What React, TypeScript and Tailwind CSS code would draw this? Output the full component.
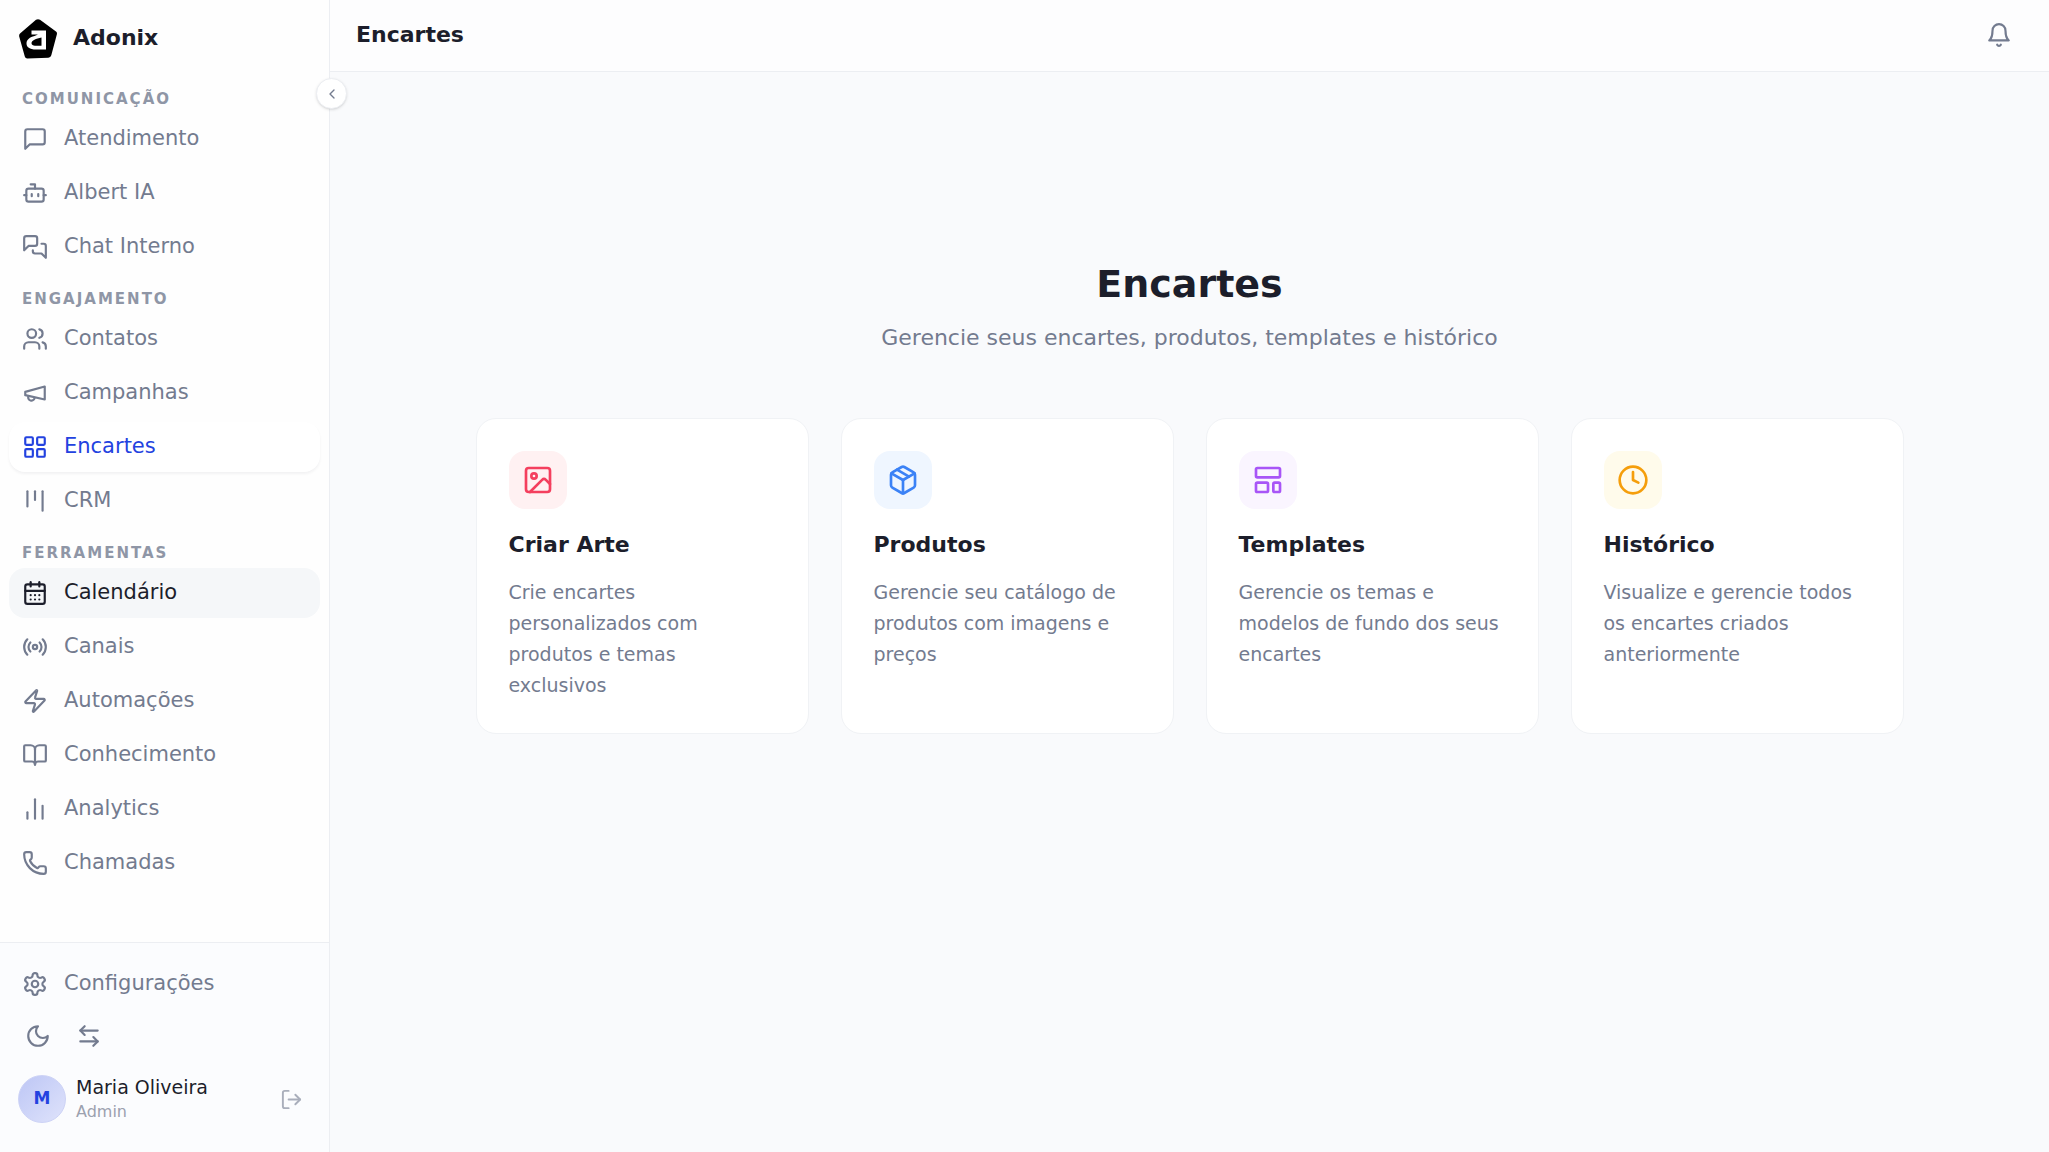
import {
    ArrowLeftRight,
    Bot,
    BookOpen,
    CalendarDays,
    ChartNoAxesColumn,
    ChevronLeft,
    Clock,
    Image,
    Kanban,
    LayoutGrid,
    LayoutTemplate,
    LogOut,
    Package,
    Phone,
    Radio,
    Zap,
    createLucideIcon,
} from "lucide-react";

const MessageSquare = createLucideIcon("message-square", [
    ["path", { d: "M21 15a2 2 0 0 1-2 2H7l-4 4V5a2 2 0 0 1 2-2h14a2 2 0 0 1 2 2z", key: "a" }],
]);
const MessagesSquare = createLucideIcon("messages-square", [
    ["path", { d: "M14 9a2 2 0 0 1-2 2H6l-4 4V4a2 2 0 0 1 2-2h8a2 2 0 0 1 2 2z", key: "a" }],
    ["path", { d: "M18 9h2a2 2 0 0 1 2 2v11l-4-4h-6a2 2 0 0 1-2-2v-1", key: "b" }],
]);
const Users = createLucideIcon("users", [
    ["path", { d: "M16 21v-2a4 4 0 0 0-4-4H6a4 4 0 0 0-4 4v2", key: "a" }],
    ["circle", { cx: "9", cy: "7", r: "4", key: "b" }],
    ["path", { d: "M22 21v-2a4 4 0 0 0-3-3.87", key: "c" }],
    ["path", { d: "M16 3.13a4 4 0 0 1 0 7.75", key: "d" }],
]);
const Megaphone = createLucideIcon("megaphone", [
    ["path", { d: "m3 11 18-5v12L3 14v-3z", key: "a" }],
    ["path", { d: "M11.6 16.8a3 3 0 1 1-5.8-1.6", key: "b" }],
]);
const Bell = createLucideIcon("bell", [
    ["path", { d: "M6 8a6 6 0 0 1 12 0c0 7 3 9 3 9H3s3-2 3-9", key: "a" }],
    ["path", { d: "M10.3 21a1.94 1.94 0 0 0 3.4 0", key: "b" }],
]);
const Moon = createLucideIcon("moon", [
    ["path", { d: "M12 3a6 6 0 0 0 9 9 9 9 0 1 1-9-9Z", key: "a" }],
]);
const Settings = createLucideIcon("settings", [
    ["path", { d: "M12.22 2h-.44a2 2 0 0 0-2 2v.18a2 2 0 0 1-1 1.73l-.43.25a2 2 0 0 1-2 0l-.15-.08a2 2 0 0 0-2.73.73l-.22.38a2 2 0 0 0 .73 2.73l.15.1a2 2 0 0 1 1 1.72v.51a2 2 0 0 1-1 1.74l-.15.09a2 2 0 0 0-.73 2.73l.22.38a2 2 0 0 0 2.73.73l.15-.08a2 2 0 0 1 2 0l.43.25a2 2 0 0 1 1 1.73V20a2 2 0 0 0 2 2h.44a2 2 0 0 0 2-2v-.18a2 2 0 0 1 1-1.73l.43-.25a2 2 0 0 1 2 0l.15.08a2 2 0 0 0 2.73-.73l.22-.39a2 2 0 0 0-.73-2.73l-.15-.08a2 2 0 0 1-1-1.74v-.5a2 2 0 0 1 1-1.74l.15-.09a2 2 0 0 0 .73-2.73l-.22-.38a2 2 0 0 0-2.73-.73l-.15.08a2 2 0 0 1-2 0l-.43-.25a2 2 0 0 1-1-1.73V4a2 2 0 0 0-2-2z", key: "a" }],
    ["circle", { cx: "12", cy: "12", r: "3", key: "b" }],
]);

const sections = [
    {
        title: "Comunicação",
        items: [
            { label: "Atendimento", icon: MessageSquare },
            { label: "Albert IA", icon: Bot },
            { label: "Chat Interno", icon: MessagesSquare },
        ],
    },
    {
        title: "Engajamento",
        items: [
            { label: "Contatos", icon: Users },
            { label: "Campanhas", icon: Megaphone },
            { label: "Encartes", icon: LayoutGrid, state: "active" },
            { label: "CRM", icon: Kanban },
        ],
    },
    {
        title: "Ferramentas",
        items: [
            { label: "Calendário", icon: CalendarDays, state: "hover" },
            { label: "Canais", icon: Radio },
            { label: "Automações", icon: Zap },
            { label: "Conhecimento", icon: BookOpen },
            { label: "Analytics", icon: ChartNoAxesColumn },
            { label: "Chamadas", icon: Phone },
        ],
    },
];

const cards = [
    {
        title: "Criar Arte",
        text: "Crie encartes personalizados com produtos e temas exclusivos",
        icon: Image,
        color: "bg-[#fff1f2] text-[#f43f5e]",
    },
    {
        title: "Produtos",
        text: "Gerencie seu catálogo de produtos com imagens e preços",
        icon: Package,
        color: "bg-[#eff6ff] text-[#3b82f6]",
    },
    {
        title: "Templates",
        text: "Gerencie os temas e modelos de fundo dos seus encartes",
        icon: LayoutTemplate,
        color: "bg-[#faf5ff] text-[#a855f7]",
    },
    {
        title: "Histórico",
        text: "Visualize e gerencie todos os encartes criados anteriormente",
        icon: Clock,
        color: "bg-[#fffbeb] text-[#f59e0b]",
    },
];

function NavItem({ label, icon: Icon, state }: { label: string; icon: any; state?: string }) {
    const look =
        state === "active"
            ? "bg-white text-[#2342e0] shadow-[0_2px_3px_rgba(20,25,45,0.05)]"
            : state === "hover"
              ? "bg-[#f5f7f9] text-[#1c1e2b]"
              : "text-[#737b8f]";
    return (
        <a href="#" className={`flex h-[50px] items-center gap-4 rounded-2xl px-[13px] ${look}`}>
            <Icon size={26} strokeWidth={2} />
            <span className="pb-[3px] text-[21px] leading-7">{label}</span>
        </a>
    );
}

function Logo() {
    return (
        <svg viewBox="0 0 38 40" className="h-10 w-[38px]" aria-hidden="true">
            <path
                d="M17 .8q2-1.3 4 0l16 11.7q1.3 1 .9 2.7l-5.600 21q-.6 2.400-3 2.500l-21 .9q-2 0-2.500-2L.2 17.500q-.4-2 1.100-3.200z"
                fill="#000"
            />
            <path
                d="M12.500 11.500H27V30.500H17C10.500 30.500 7.500 28 7.500 24.500C7.500 20.500 11 18 15.500 17L19 15.500H12.500z M22.500 18.500C17 19.500 12.500 21.500 12.500 24.300C12.500 26 14 26.700 16 26.700H22.500z"
                fill="#fff"
                fillRule="evenodd"
            />
        </svg>
    );
}

export default function App() {
    return (
        <div className="flex min-h-screen bg-[#f9fafc] font-['DejaVu_Sans',sans-serif] text-[#1c1e2b]">
            <aside className="relative flex w-[330px] shrink-0 flex-col border-r border-[#eceef2] bg-[#fefefe]">
                <div className="flex items-center gap-4 px-[19px] pt-[19px]">
                    <Logo />
                    <span className="pb-[2px] text-[22px] leading-7 font-bold">Adonix</span>
                </div>
                <button
                    aria-label="Recolher menu"
                    className="absolute top-[78px] -right-[18px] flex size-[31px] items-center justify-center rounded-full border border-[#eceef2] bg-white text-[#737b8f] shadow-sm"
                >
                    <ChevronLeft size={16} />
                </button>

                <nav className="flex grow flex-col gap-[17px] px-[9px] pt-[30px]">
                    {sections.map((section) => (
                        <div key={section.title}>
                            <h2 className="mb-[5px] px-[13px] text-[15px] leading-5 font-bold tracking-[2px] text-[#8f96a6] uppercase">
                                {section.title}
                            </h2>
                            <div className="flex flex-col gap-1">
                                {section.items.map((item) => (
                                    <NavItem key={item.label} {...item} />
                                ))}
                            </div>
                        </div>
                    ))}
                </nav>

                <div className="border-t border-[#eceef2] bg-[#fbfcfe] px-[9px] pt-4 pb-7">
                    <NavItem label="Configurações" icon={Settings} />
                    <div className="mt-[3px] flex gap-[3px] px-[5px] text-[#737b8f]">
                        <button aria-label="Tema escuro" className="flex size-12 items-center justify-center">
                            <Moon size={26} strokeWidth={2} />
                        </button>
                        <button aria-label="Trocar conta" className="flex size-12 items-center justify-center">
                            <ArrowLeftRight size={26} strokeWidth={2} />
                        </button>
                    </div>
                    <div className="mt-[14px] flex items-center px-[9px]">
                        <div className="flex size-12 items-center justify-center rounded-full border border-[#cdd3f6] bg-linear-to-br from-[#bdc6f5] to-[#dfe3fb] text-[17px] font-bold text-[#2342e0]">
                            M
                        </div>
                        <div className="ml-[10px] grow">
                            <p className="text-[19px] leading-[26px]">Maria Oliveira</p>
                            <p className="text-[16px] leading-6 text-[#9ba1af]">Admin</p>
                        </div>
                        <button aria-label="Sair" className="mr-2 text-[#a9aebb]">
                            <LogOut size={23} strokeWidth={2} />
                        </button>
                    </div>
                </div>
            </aside>

            <div className="flex grow flex-col">
                <header className="flex h-[72px] items-center justify-between border-b border-[#eceef2] bg-[#fdfdfe] pr-[37px] pb-[2px] pl-[26px]">
                    <h1 className="text-[22px] leading-7 font-bold">Encartes</h1>
                    <button aria-label="Notificações" className="text-[#737b8f]">
                        <Bell size={26} strokeWidth={2} />
                    </button>
                </header>

                <main className="mx-auto w-full max-w-[1492px] px-8 pt-[186px] pb-12">
                    <div className="text-center">
                        <h2 className="text-[38px] leading-[52px] font-bold">Encartes</h2>
                        <p className="mt-3 text-[22px] leading-8 text-[#737b8f]">
                            Gerencie seus encartes, produtos, templates e histórico
                        </p>
                    </div>
                    <div className="mt-16 grid grid-cols-4 gap-8">
                        {cards.map(({ title, text, icon: Icon, color }) => (
                            <a
                                key={title}
                                href="#"
                                className="block rounded-[20px] border border-[#f0f2f5] bg-white p-8"
                            >
                                <div className={`flex size-[58px] items-center justify-center rounded-2xl ${color}`}>
                                    <Icon size={32} strokeWidth={2} />
                                </div>
                                <h3 className="mt-5 text-[22px] leading-8 font-bold">{title}</h3>
                                <p className="mt-4 text-[19px] leading-[31px] text-[#737b8f]">{text}</p>
                            </a>
                        ))}
                    </div>
                </main>
            </div>
        </div>
    );
}
